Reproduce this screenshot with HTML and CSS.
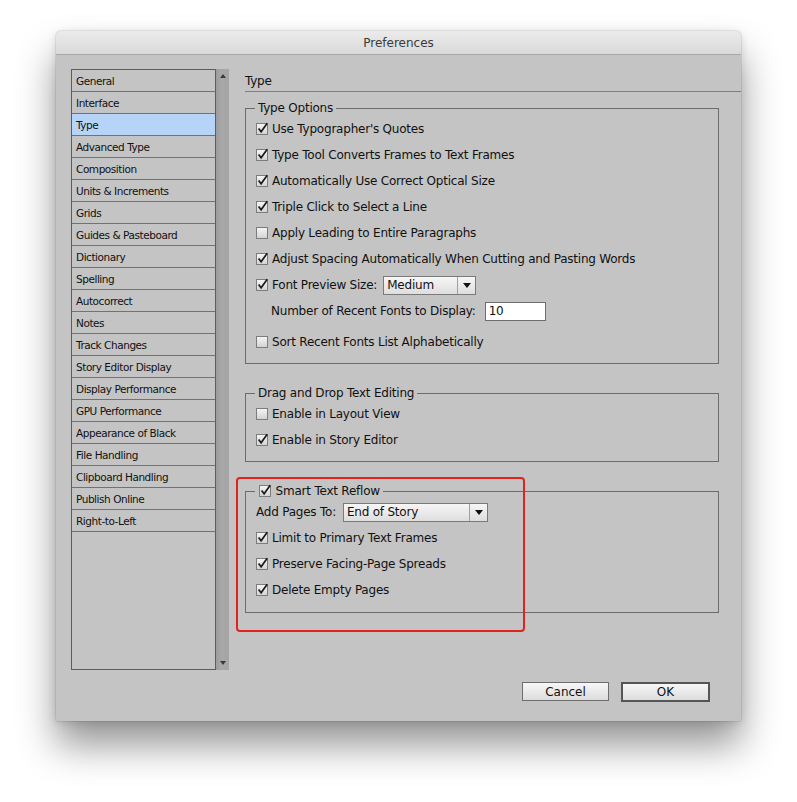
FILE: index.html
```html
<!DOCTYPE html>
<html>
<head>
<meta charset="utf-8">
<title>Preferences</title>
<link rel="stylesheet" href="styles.css">
</head>
<body>
<svg width="0" height="0" class="defs">
  <defs>
    <linearGradient id="cbg" x1="0" y1="0" x2="0" y2="1">
      <stop offset="0" stop-color="#f6f6f6"/>
      <stop offset="1" stop-color="#d2d2d2"/>
    </linearGradient>
    <symbol id="cb-on" viewBox="0 0 13 13">
      <rect x="0.5" y="1.5" width="11" height="11" fill="url(#cbg)" stroke="#7c7c7c"/>
      <path d="M2.6 6.6 L5.1 9.8 L11.2 1.2" fill="none" stroke="#1c1c1c" stroke-width="1.7"/>
    </symbol>
    <symbol id="cb-off" viewBox="0 0 13 13">
      <rect x="0.5" y="1.5" width="11" height="11" fill="url(#cbg)" stroke="#7c7c7c"/>
    </symbol>
  </defs>
</svg>
<div class="window">
  <div class="titlebar">Preferences</div>
  <div class="content">
    <div class="sidebar">
      <ul class="list">
        <li>General</li>
        <li>Interface</li>
        <li class="selected">Type</li>
        <li>Advanced Type</li>
        <li>Composition</li>
        <li>Units &amp; Increments</li>
        <li>Grids</li>
        <li>Guides &amp; Pasteboard</li>
        <li>Dictionary</li>
        <li>Spelling</li>
        <li>Autocorrect</li>
        <li>Notes</li>
        <li>Track Changes</li>
        <li>Story Editor Display</li>
        <li>Display Performance</li>
        <li>GPU Performance</li>
        <li>Appearance of Black</li>
        <li>File Handling</li>
        <li>Clipboard Handling</li>
        <li>Publish Online</li>
        <li>Right-to-Left</li>
      </ul>
      <div class="scrollbar">
        <span class="arrow up"></span>
        <span class="arrow down"></span>
      </div>
    </div>
    <div class="main">
      <div class="heading">Type</div>

      <fieldset class="group">
        <legend>Type Options</legend>
        <div class="row"><svg class="cb"><use href="#cb-on"/></svg><span>Use Typographer's Quotes</span></div>
        <div class="row"><svg class="cb"><use href="#cb-on"/></svg><span>Type Tool Converts Frames to Text Frames</span></div>
        <div class="row"><svg class="cb"><use href="#cb-on"/></svg><span>Automatically Use Correct Optical Size</span></div>
        <div class="row"><svg class="cb"><use href="#cb-on"/></svg><span>Triple Click to Select a Line</span></div>
        <div class="row"><svg class="cb"><use href="#cb-off"/></svg><span>Apply Leading to Entire Paragraphs</span></div>
        <div class="row"><svg class="cb"><use href="#cb-on"/></svg><span>Adjust Spacing Automatically When Cutting and Pasting Words</span></div>
        <div class="row"><svg class="cb"><use href="#cb-on"/></svg><span>Font Preview Size:</span>
          <div class="select select-medium"><span class="sel-text">Medium</span><span class="sel-arrow"></span></div>
        </div>
        <div class="row indent"><span>Number of Recent Fonts to Display:</span><div class="input">10</div></div>
        <div class="row spaced"><svg class="cb"><use href="#cb-off"/></svg><span>Sort Recent Fonts List Alphabetically</span></div>
      </fieldset>

      <fieldset class="group group-drag">
        <legend>Drag and Drop Text Editing</legend>
        <div class="row"><svg class="cb"><use href="#cb-off"/></svg><span>Enable in Layout View</span></div>
        <div class="row"><svg class="cb"><use href="#cb-on"/></svg><span>Enable in Story Editor</span></div>
      </fieldset>

      <fieldset class="group group-reflow">
        <legend class="legend-cb"><svg class="cb cb-inline"><use href="#cb-on"/></svg> Smart Text Reflow</legend>
        <div class="row"><span class="label">Add Pages To:</span>
          <div class="select select-story"><span class="sel-text">End of Story</span><span class="sel-arrow"></span></div>
        </div>
        <div class="row"><svg class="cb"><use href="#cb-on"/></svg><span>Limit to Primary Text Frames</span></div>
        <div class="row"><svg class="cb"><use href="#cb-on"/></svg><span>Preserve Facing-Page Spreads</span></div>
        <div class="row"><svg class="cb"><use href="#cb-on"/></svg><span>Delete Empty Pages</span></div>
      </fieldset>

      <div class="highlight"></div>
    </div>
  </div>
  <div class="footer">
    <button class="btn">Cancel</button>
    <button class="btn btn-default">OK</button>
  </div>
</div>
</body>
</html>
```

FILE: styles.css
```css
html, body {
  margin: 0;
  padding: 0;
  background: #ffffff;
}
html {
  min-height: 802px;
}
body {
  min-height: 802px;
  box-sizing: border-box;
  padding: 31px 0 0 56px;
  font-family: "DejaVu Sans", "Liberation Sans", sans-serif;
  color: #111;
}
.defs {
  position: absolute;
  width: 0;
  height: 0;
}
.window {
  width: 685px;
  height: 690px;
  background: #c4c4c4;
  border-radius: 5px 5px 2px 2px;
  box-shadow: 0 0 0 1px rgba(0,0,0,0.07), 0 24px 38px rgba(0,0,0,0.42), 0 2px 10px rgba(0,0,0,0.12);
  display: flex;
  flex-direction: column;
  overflow: hidden;
}
.titlebar {
  height: 22px;
  line-height: 22px;
  padding-top: 1px;
  border-bottom: 1px solid #a9a9a9;
  background: linear-gradient(#ebebeb, #d9d9d9);
  text-align: center;
  font-size: 12px;
  color: #3a3a3a;
}
.content {
  display: flex;
  padding: 14px 0 0 15px;
  height: 607px;
}
.sidebar {
  display: flex;
  height: 601px;
}
.list {
  list-style: none;
  margin: 0;
  padding: 0;
  width: 143px;
  height: 599px;
  border: 1px solid #2a62cc;
  font-size: 10.5px;
  letter-spacing: -0.45px;
}
.list li {
  height: 20px;
  line-height: 20px;
  padding-top: 1px;
  border-bottom: 1px solid #727272;
  padding-left: 4px;
  color: #111;
  white-space: nowrap;
}
.list li.selected {
  background: #b6d4f8;
}
.scrollbar {
  width: 13px;
  height: 601px;
  background: linear-gradient(90deg, #9c9c9c, #a8a8a8 40%, #a5a5a5);
  display: flex;
  flex-direction: column;
  justify-content: space-between;
  align-items: center;
  padding: 5px 0;
  box-sizing: border-box;
}
.arrow {
  width: 0;
  height: 0;
  border-left: 3px solid transparent;
  border-right: 3px solid transparent;
}
.arrow.up {
  border-bottom: 4px solid #3a3a3a;
}
.arrow.down {
  border-top: 4px solid #3a3a3a;
}
.main {
  position: relative;
  margin-left: 16px;
  width: 474px;
  font-size: 12px;
  letter-spacing: -0.22px;
}
.heading {
  margin-top: 4px;
  width: 496px;
  height: 16px;
  line-height: 16px;
  padding-bottom: 2px;
  border-bottom: 1px solid #7d7d7d;
  font-size: 12px;
  color: #111;
}
.group {
  margin: 8px 0 0 0;
  padding: 0 0 8px 10px;
  border: 1px solid #6c6c6c;
  min-width: 0;
}
.group legend {
  margin-left: -1px;
  padding: 0 3px;
  height: 16px;
  line-height: 16px;
  font-size: 12px;
  white-space: nowrap;
}
.group-drag {
  margin-top: 21px;
}
.group-reflow {
  margin-top: 21px;
  padding-bottom: 9px;
}
.group legend.legend-cb {
  padding-left: 4px;
}
.cb-inline {
  vertical-align: -2px;
  margin-top: 0;
}
.row {
  height: 26px;
  display: flex;
  align-items: center;
  gap: 3px;
  white-space: nowrap;
}
.row.indent {
  padding-left: 15px;
}
.row.spaced {
  margin-top: 5px;
}
.cb {
  width: 13px;
  height: 13px;
  flex: none;
  margin-top: -2px;
}
.label {
  margin-right: 4px;
}
.select {
  margin-left: 3px;
  height: 17px;
  border: 1px solid #7a7a7a;
  background: linear-gradient(#f6f6f6, #dedede);
  display: flex;
  align-items: stretch;
}
.select-medium {
  width: 91px;
}
.select-story {
  margin-left: 0;
  width: 143px;
}
.sel-text {
  flex: 1;
  line-height: 17px;
  padding-left: 3px;
  border-right: 1px solid #a0a0a0;
}
.sel-arrow {
  width: 17px;
  position: relative;
}
.sel-arrow::after {
  content: "";
  position: absolute;
  left: 5px;
  top: 6px;
  border-left: 4px solid transparent;
  border-right: 4px solid transparent;
  border-top: 5px solid #111;
}
.input {
  margin-left: 6px;
  width: 56px;
  height: 17px;
  line-height: 17px;
  padding-left: 3px;
  border: 1px solid #6e6e6e;
  background: #ffffff;
}
.highlight {
  position: absolute;
  left: -9px;
  top: 408px;
  width: 285px;
  height: 151px;
  border: 2px solid #e2231a;
  border-radius: 4px;
}
.footer {
  display: flex;
  justify-content: flex-end;
  align-items: flex-start;
  gap: 12px;
  padding: 6px 31px 0 0;
}
.btn {
  font-family: "DejaVu Sans", "Liberation Sans", sans-serif;
  font-size: 12px;
  color: #111;
  height: 19px;
  width: 87px;
  padding: 0;
  border: 1px solid #6e6e6e;
  background: linear-gradient(#f7f7f7, #dcdcdc);
  border-radius: 0;
}
.btn-default {
  width: 89px;
  height: 20px;
  border: 2px solid #555;
}
```
